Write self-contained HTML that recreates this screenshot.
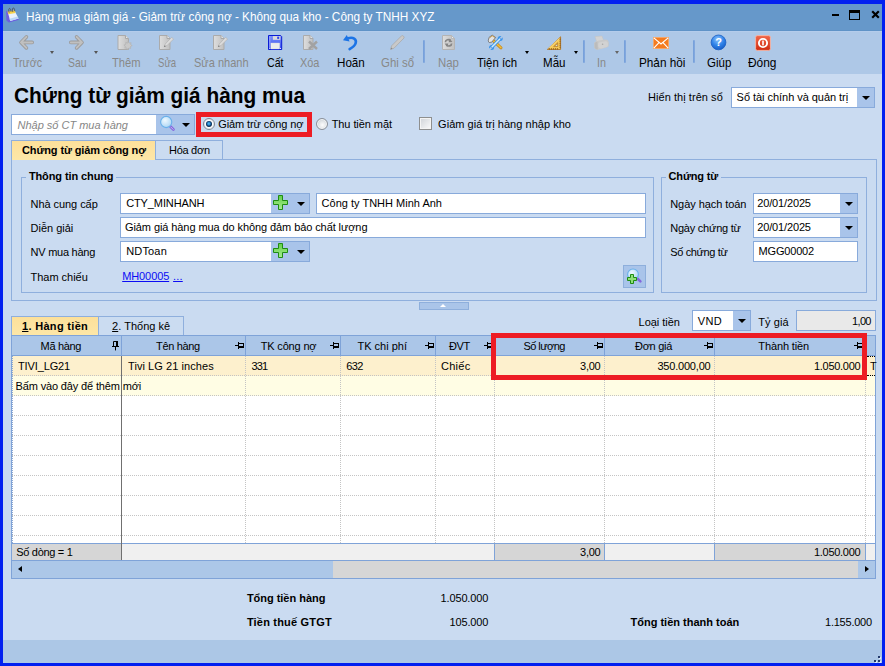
<!DOCTYPE html>
<html lang="vi"><head><meta charset="utf-8"><title>Hàng mua giảm giá</title>
<style>
*{box-sizing:border-box;margin:0;padding:0}
html,body{width:885px;height:666px;overflow:hidden;background:#0220f0}
body{position:relative;font-family:"Liberation Sans",sans-serif;font-size:11px;color:#000}
.a{position:absolute}
.t{position:absolute;white-space:nowrap}
.sep{top:40px;width:2px;height:23px;background:linear-gradient(90deg,#729dd9,#86abdf);border-radius:1px}
.dd{width:0;height:0;border-left:3.5px solid transparent;border-right:3.5px solid transparent;border-top:4px solid #000}
.dd.s{border-left-width:2.5px;border-right-width:2.5px;border-top-width:3px}
.dd{border-left-width:4px;border-right-width:4px}
.inp{background:#fff;border:1px solid #88aadb}
.btnp{background:#a9c4ea}
.grp{border:1px solid #8fafdd}
.tab{border:1px solid #8fafdd;border-bottom:none;background:#cbdcf1}
.tabA{background:linear-gradient(#fde09a,#fde7a8)}
.hc{top:336px;height:20px;background:#abc6e8;border-right:1px solid #7fa3d8;border-bottom:1px solid #7fa3d8}
.vl{top:356px;width:0;height:187px;border-left:1px dotted #c4c4c4}
.hl{left:12px;width:863px;height:0;border-top:1px dotted #c4c4c4}
.red{border:5px solid #ed1c24}
</style></head><body>
<!-- window chrome -->
<div class="a" style="left:3px;top:4px;width:879px;height:27px;background:#6698ca;border-bottom:1px solid #5f93c7"></div>
<div class="a" style="left:3px;top:31px;width:879px;height:43px;background:#aec8e7;border-top:1px solid #b4cceb"></div>
<div class="a" style="left:3px;top:74px;width:879px;height:566px;background:#cadbf1"></div>
<div class="a" style="left:3px;top:640px;width:879px;height:23px;background:#acc7e6"></div>

<!-- window controls -->
<div class="a" style="left:832px;top:14px;width:7px;height:2px;background:#000"></div>
<div class="a" style="left:849px;top:10px;width:11px;height:10px;border:1px solid #000;border-top-width:3px"></div>
<svg class="a" style="left:871px;top:10px" width="9" height="9" viewBox="0 0 9 9"><path d="M1.2 1.2 L7.8 7.8 M7.8 1.2 L1.2 7.8" stroke="#000" stroke-width="2.2"/></svg>

<!-- toolbar separators -->
<div class="a sep" style="left:423px"></div>
<div class="a sep" style="left:583px"></div>
<div class="a sep" style="left:624px"></div>
<div class="a sep" style="left:693px"></div>
<!-- toolbar dropdown arrows -->
<div class="a dd s" style="left:50px;top:51px;border-top-color:#555"></div>
<div class="a dd s" style="left:94px;top:51px;border-top-color:#555"></div>
<div class="a dd s" style="left:524.5px;top:51px"></div>
<div class="a dd s" style="left:574.2px;top:51px"></div>
<div class="a dd s" style="left:615px;top:51px;border-top-color:#666"></div>


<!-- combo Hiển thị trên sổ -->
<div class="a inp" style="left:731px;top:87px;width:144px;height:21px"></div>
<div class="a btnp" style="left:857px;top:88px;width:17px;height:19px"></div>
<div class="a dd" style="left:861.5px;top:96px"></div>

<!-- search box -->
<div class="a inp" style="left:11px;top:114px;width:184px;height:21px"></div>
<div class="a btnp" style="left:156px;top:115px;width:38px;height:19px"></div>
<div class="a dd" style="left:181.5px;top:123px"></div>

<!-- red highlight 1 -->
<div class="a red" style="left:196px;top:112px;width:116px;height:25px"></div>
<!-- radios -->
<div class="a" style="left:203px;top:118px;width:12px;height:12px;border-radius:50%;border:1px solid #7d8694;background:#fff;box-shadow:inset 0 0 0 1px #e4e6ea"></div>
<div class="a" style="left:205.7px;top:120.7px;width:6.6px;height:6.6px;border-radius:50%;background:radial-gradient(circle at 48% 45%,#5cc0f0 0,#2c8ed0 28%,#0e3a6c 52%,#0a2a50 70%)"></div>
<div class="a" style="left:316px;top:118px;width:12px;height:12px;border-radius:50%;border:1px solid #8a9099;background:radial-gradient(circle at 55% 60%,#fdfdfd 0,#e2e5e8 45%,#c9ced3 75%);box-shadow:inset 0 0 0 1px #f4f5f6"></div>
<!-- checkbox -->
<div class="a" style="left:419px;top:117px;width:13px;height:13px;border:1px solid #8e8f8f;background:linear-gradient(135deg,#cfd3d8,#fbfbfb);box-shadow:inset 0 0 0 1px #f4f4f4"></div>

<!-- top tabs -->
<div class="a tab tabA" style="left:11px;top:140px;width:145px;height:20px"></div>
<div class="a tab" style="left:155px;top:140px;width:68px;height:20px"></div>
<!-- tab panel -->
<div class="a grp" style="left:11px;top:159px;width:866px;height:142px"></div>
<div class="a" style="left:12px;top:159px;width:143px;height:1px;background:#fde7a8"></div>
<!-- groupboxes -->
<div class="a grp" style="left:21px;top:177px;width:633px;height:116px"></div>
<div class="a" style="left:26px;top:177px;width:90px;height:1px;background:#cadbf1"></div>
<div class="a grp" style="left:661px;top:177px;width:206px;height:116px"></div>
<div class="a" style="left:666px;top:177px;width:55px;height:1px;background:#cadbf1"></div>

<!-- inputs in group 1 -->
<div class="a inp" style="left:120px;top:193px;width:190px;height:21px"></div>
<div class="a btnp" style="left:271px;top:194px;width:38px;height:19px"></div>
<div class="a dd" style="left:296.5px;top:202px"></div>
<div class="a inp" style="left:316px;top:193px;width:330px;height:21px"></div>
<div class="a inp" style="left:120px;top:217px;width:526px;height:21px"></div>
<div class="a inp" style="left:120px;top:241px;width:190px;height:21px"></div>
<div class="a btnp" style="left:271px;top:242px;width:38px;height:19px"></div>
<div class="a dd" style="left:296.5px;top:250px"></div>
<div class="a btnp" style="left:623px;top:265px;width:23px;height:23px;border:1px solid #8eafdc"></div>

<!-- inputs in group 2 -->
<div class="a inp" style="left:753px;top:193px;width:105px;height:21px"></div>
<div class="a btnp" style="left:840px;top:194px;width:17px;height:19px"></div>
<div class="a dd" style="left:844.5px;top:202px"></div>
<div class="a inp" style="left:753px;top:217px;width:105px;height:21px"></div>
<div class="a btnp" style="left:840px;top:218px;width:17px;height:19px"></div>
<div class="a dd" style="left:844.5px;top:226px"></div>
<div class="a inp" style="left:753px;top:241px;width:105px;height:21px"></div>

<!-- collapse bar -->
<div class="a" style="left:419px;top:302px;width:50px;height:8px;background:#aac5e9;border:1px solid #8eafdc"></div>
<div class="a" style="left:440px;top:304px;width:0;height:0;border-left:3px solid transparent;border-right:3px solid transparent;border-bottom:3px solid #fff"></div>

<!-- grid tabs -->
<div class="a tab tabA" style="left:11px;top:316px;width:88px;height:20px"></div>
<div class="a tab" style="left:98px;top:316px;width:86px;height:20px"></div>
<!-- currency -->
<div class="a inp" style="left:692px;top:310px;width:59px;height:21px"></div>
<div class="a btnp" style="left:733px;top:311px;width:17px;height:19px"></div>
<div class="a dd" style="left:737.5px;top:319px"></div>
<div class="a inp" style="left:796px;top:310px;width:80px;height:21px;background:#e9e9e9"></div>

<!-- grid -->
<div class="a" style="left:11px;top:335px;width:865px;height:244px;background:#fff;border:1px solid #7fa3d8"></div>
<!-- header cells -->
<div class="a hc" style="left:12px;width:110px"></div>
<div class="a hc" style="left:122px;width:124px"></div>
<div class="a hc" style="left:246px;width:95px"></div>
<div class="a hc" style="left:341px;width:95px"></div>
<div class="a hc" style="left:436px;width:59px"></div>
<div class="a hc" style="left:495px;width:110px"></div>
<div class="a hc" style="left:605px;width:110px"></div>
<div class="a hc" style="left:715px;width:151px"></div>
<div class="a hc" style="left:866px;width:9px;border-right:none"></div>
<!-- rows -->
<div class="a" style="left:12px;top:356px;width:863px;height:20px;background:#fdf0cd"></div>
<div class="a" style="left:12px;top:376px;width:863px;height:20px;background:#fffde4"></div>
<!-- horizontal dotted lines -->
<div class="a hl" style="top:375px"></div>
<div class="a hl" style="top:395px"></div>
<div class="a hl" style="top:415px"></div>
<div class="a hl" style="top:435px"></div>
<div class="a hl" style="top:455px"></div>
<div class="a hl" style="top:475px"></div>
<div class="a hl" style="top:495px"></div>
<div class="a hl" style="top:515px"></div>
<div class="a hl" style="top:535px"></div>
<!-- vertical dotted lines -->
<div class="a vl" style="left:245px"></div>
<div class="a vl" style="left:340px"></div>
<div class="a vl" style="left:435px"></div>
<div class="a vl" style="left:494px"></div>
<div class="a vl" style="left:604px"></div>
<div class="a vl" style="left:714px"></div>
<div class="a vl" style="left:865px"></div>
<div class="a" style="left:867px;top:356px;width:8px;height:20px;border-top:1px dotted #000;border-bottom:1px dotted #000"></div>
<div class="a" style="left:12px;top:356px;width:0;height:187px;border-left:1px dotted #8fa9cf"></div>
<!-- fixed column splitter -->
<!-- footer row -->
<div class="a" style="left:12px;top:543px;width:863px;height:18px;background:#f0f0f0;border-top:1px solid #7fa3d8;border-bottom:1px solid #7fa3d8"></div>
<div class="a" style="left:12px;top:544px;width:109px;height:16px;background:#d6d6d6"></div>
<div class="a" style="left:494px;top:543px;width:111px;height:18px;background:#d6d6d6;border:1px solid #7fa3d8"></div>
<div class="a" style="left:714px;top:543px;width:152px;height:18px;background:#d6d6d6;border:1px solid #7fa3d8"></div>
<div class="a" style="left:121px;top:356px;width:1px;height:204px;background:#707070"></div>
<!-- scrollbar -->
<div class="a" style="left:12px;top:561px;width:863px;height:17px;background:#d6d6d6"></div>
<div class="a" style="left:12px;top:561px;width:321px;height:17px;background:#acc7e8"></div>
<div class="a" style="left:858px;top:561px;width:17px;height:17px;background:#acc7e8"></div>
<div class="a" style="left:18px;top:566px;width:0;height:0;border-top:3.5px solid transparent;border-bottom:3.5px solid transparent;border-right:4px solid #000"></div>
<div class="a" style="left:865px;top:566px;width:0;height:0;border-top:3.5px solid transparent;border-bottom:3.5px solid transparent;border-left:4px solid #000"></div>

<!-- pins -->
<svg class="a" style="left:112px;top:341px" width="8" height="10" viewBox="0 0 8 10"><path d="M1.5 .5 H4.5 V5 M1.5 .5 V5" fill="none" stroke="#000"/><rect x="4" y="0" width="2" height="5.5" fill="#000"/><rect x="0" y="5" width="7" height="1" fill="#000"/><rect x="3" y="6" width="1" height="3.4" fill="#000"/></svg>
<svg class="a" style="left:235px;top:342px" width="10" height="8" viewBox="0 0 10 8" shape-rendering="crispEdges"><rect x="0" y="3" width="3" height="1"/><rect x="3" y="0" width="1" height="7"/><rect x="4" y="1" width="5" height="1"/><rect x="8" y="1" width="1" height="5"/><rect x="4" y="4" width="5" height="2"/></svg>
<svg class="a" style="left:330px;top:342px" width="10" height="8" viewBox="0 0 10 8" shape-rendering="crispEdges"><rect x="0" y="3" width="3" height="1"/><rect x="3" y="0" width="1" height="7"/><rect x="4" y="1" width="5" height="1"/><rect x="8" y="1" width="1" height="5"/><rect x="4" y="4" width="5" height="2"/></svg>
<svg class="a" style="left:425px;top:342px" width="10" height="8" viewBox="0 0 10 8" shape-rendering="crispEdges"><rect x="0" y="3" width="3" height="1"/><rect x="3" y="0" width="1" height="7"/><rect x="4" y="1" width="5" height="1"/><rect x="8" y="1" width="1" height="5"/><rect x="4" y="4" width="5" height="2"/></svg>
<svg class="a" style="left:484px;top:342px" width="10" height="8" viewBox="0 0 10 8" shape-rendering="crispEdges"><rect x="0" y="3" width="3" height="1"/><rect x="3" y="0" width="1" height="7"/><rect x="4" y="1" width="5" height="1"/><rect x="8" y="1" width="1" height="5"/><rect x="4" y="4" width="5" height="2"/></svg>
<svg class="a" style="left:594px;top:342px" width="10" height="8" viewBox="0 0 10 8" shape-rendering="crispEdges"><rect x="0" y="3" width="3" height="1"/><rect x="3" y="0" width="1" height="7"/><rect x="4" y="1" width="5" height="1"/><rect x="8" y="1" width="1" height="5"/><rect x="4" y="4" width="5" height="2"/></svg>
<svg class="a" style="left:704px;top:342px" width="10" height="8" viewBox="0 0 10 8" shape-rendering="crispEdges"><rect x="0" y="3" width="3" height="1"/><rect x="3" y="0" width="1" height="7"/><rect x="4" y="1" width="5" height="1"/><rect x="8" y="1" width="1" height="5"/><rect x="4" y="4" width="5" height="2"/></svg>
<svg class="a" style="left:854px;top:342px" width="10" height="8" viewBox="0 0 10 8" shape-rendering="crispEdges"><rect x="0" y="3" width="3" height="1"/><rect x="3" y="0" width="1" height="7"/><rect x="4" y="1" width="5" height="1"/><rect x="8" y="1" width="1" height="5"/><rect x="4" y="4" width="5" height="2"/></svg>
<!-- red highlight 2 -->
<div class="a red" style="left:491px;top:333px;width:376px;height:47px"></div>

<!-- size grip -->
<div class="a" style="left:879px;top:657px;width:2px;height:2px;background:#e4edf8"></div>
<div class="a" style="left:875px;top:661px;width:2px;height:2px;background:#e4edf8"></div>
<div class="a" style="left:879px;top:661px;width:2px;height:2px;background:#e4edf8"></div>
<div class="a" style="left:878px;top:656px;width:2px;height:2px;background:#233a6c"></div>
<div class="a" style="left:874px;top:660px;width:2px;height:2px;background:#233a6c"></div>
<div class="a" style="left:878px;top:660px;width:2px;height:2px;background:#233a6c"></div>

<!-- title icon -->
<svg class="a" style="left:5px;top:7px" width="15" height="17" viewBox="0 0 15 17">
<path d="M1.1 3.6 L1.4 13.6 L3.8 15.4 L13.4 12.9 L13.6 11.6 L5 6 Z" fill="#6c5ee0"/>
<path d="M2.8 5.1 L9.6 3.8 L13.6 11.6 L5.2 13.9 Z" fill="#e9f2fd"/>
<path d="M4.6 11.8 L12.6 9.6 L13.6 11.6 L5.2 13.9 Z" fill="#b9d6f8"/>
<path d="M2.5 4.6 L9.6 3.3 L10.6 6 L3.3 7.3 Z" fill="#f6d24a"/>
<path d="M4.2 5.6 C2.4 .6 6 -.2 6 4.8 M7.9 5 C6.2 .2 9.8 -.6 9.7 4.2" stroke="#54545e" stroke-width=".9" fill="none"/>
</svg>
<!-- back / forward arrows -->
<svg class="a" style="left:18px;top:34px" width="17" height="17" viewBox="0 0 17 17">
<path d="M8.4 2.9 L3 8.4 L8.4 13.9 M3.6 8.4 H14.2" fill="none" stroke="#9a9a9a" stroke-width="3.6" stroke-linecap="round" stroke-linejoin="round"/>
<path d="M8.4 2.9 L3 8.4 L8.4 13.9 M3.6 8.4 H14.2" fill="none" stroke="#c0c0c0" stroke-width="2" stroke-linecap="round" stroke-linejoin="round"/>
</svg>
<svg class="a" style="left:68px;top:34px" width="17" height="17" viewBox="0 0 17 17">
<path d="M8.6 2.9 L14 8.4 L8.6 13.9 M13.4 8.4 H2.8" fill="none" stroke="#9a9a9a" stroke-width="3.6" stroke-linecap="round" stroke-linejoin="round"/>
<path d="M8.6 2.9 L14 8.4 L8.6 13.9 M13.4 8.4 H2.8" fill="none" stroke="#c0c0c0" stroke-width="2" stroke-linecap="round" stroke-linejoin="round"/>
</svg>
<!-- Thêm (doc + burst) -->
<svg class="a" style="left:117px;top:34px" width="17" height="17" viewBox="0 0 17 17">
<path d="M1 1.5 H8.5 L11.5 4.5 V15.5 H1 Z" fill="url(#dg)" stroke="#ababab"/>
<path d="M8.5 1.5 V4.5 H11.5" fill="#e6e6e6" stroke="#a9a9a9"/>
<path d="M11 7.6 l1.2 1.5 1.9-.4 -.5 1.8 1.6 1.1 -1.7.9 .2 1.9 -1.9-.4 -1.1 1.6 -1-1.7 -1.9.2 .6-1.8 -1.5-1.2 1.8-.8 .1-1.9 1.7.8z" fill="#c9c9c9" stroke="#aeaeae" stroke-width=".6"/>
</svg>
<!-- Sửa -->
<svg class="a" style="left:158px;top:34px" width="17" height="17" viewBox="0 0 17 17">
<path d="M1.5 1.5 H9 L12 4.5 V15.5 H1.5 Z" fill="url(#dg)" stroke="#ababab"/>
<path d="M9 1.5 V4.5 H12" fill="#e6e6e6" stroke="#a9a9a9"/>
<path d="M6.4 12.6 L7.2 10 L13.6 3.4 L15.6 5 L9 11.6 Z" fill="#dcdcdc" stroke="#b3b3b3" stroke-width=".7"/>
<circle cx="6.8" cy="12.3" r=".7" fill="#777"/>
</svg>
<!-- Sửa nhanh -->
<svg class="a" style="left:212px;top:34px" width="17" height="17" viewBox="0 0 17 17">
<path d="M1.5 1.5 H9 L12 4.5 V15.5 H1.5 Z" fill="url(#dg)" stroke="#ababab"/>
<path d="M9 1.5 V4.5 H12" fill="#e6e6e6" stroke="#a9a9a9"/>
<path d="M6.4 12.6 L7.2 10 L13.6 3.4 L15.6 5 L9 11.6 Z" fill="#dcdcdc" stroke="#b3b3b3" stroke-width=".7"/>
<circle cx="6.8" cy="12.3" r=".7" fill="#777"/>
</svg>
<!-- Cất (floppy) -->
<svg class="a" style="left:268px;top:35px" width="15" height="15" viewBox="0 0 15 15">
<defs><linearGradient id="fl" x1="0" y1="0" x2="0" y2="1"><stop offset="0" stop-color="#7d90f8"/><stop offset="1" stop-color="#3850f0"/></linearGradient></defs>
<path d="M.5 .5 H12.6 L13.7 1.6 V14.5 H.5 Z" fill="url(#fl)" stroke="#0a1cd6"/>
<rect x="1.2" y="1.2" width="1.2" height="12" fill="#a5b2fa" opacity=".7"/>
<rect x="4.9" y="1.1" width="7.4" height="3.7" fill="#dcdcdc"/>
<rect x="9.2" y="1.7" width="2" height="2.2" fill="#2a40ee"/>
<rect x="3" y="8.1" width="8.4" height="5.8" fill="#ececec" stroke="#fff8e0" stroke-width=".5"/>
<rect x="1.3" y="13" width="1" height="1" fill="#dfe4ff"/><rect x="12" y="13" width="1" height="1" fill="#dfe4ff"/>
</svg>
<!-- Xóa -->
<svg class="a" style="left:302px;top:34px" width="17" height="17" viewBox="0 0 17 17">
<path d="M1.5 1.5 H8 L11 4.5 V15.5 H1.5 Z" fill="url(#dg)" stroke="#ababab"/>
<path d="M8 1.5 V4.5 H11" fill="#e6e6e6" stroke="#a9a9a9"/>
<path d="M7 7.5 L15 15 M15 7.5 L7 15" stroke="#a2a2a2" stroke-width="2.4"/>
</svg>
<!-- Hoãn (undo) -->
<svg class="a" style="left:342px;top:34px" width="17" height="17" viewBox="0 0 17 17">
<path d="M6 4.3 C11 2.6 15 5.2 13.6 9.4 C12.9 11.6 10.6 13.4 7.6 15.2" fill="none" stroke="#1c74e6" stroke-width="2.6" stroke-linecap="round"/>
<path d="M1 6.2 L4.8 1 L7.6 7.6 Z" fill="#1c74e6"/>
</svg>
<!-- Ghi sổ (pencil) -->
<svg class="a" style="left:389px;top:34px" width="17" height="17" viewBox="0 0 17 17">
<path d="M1.6 15.4 L2.6 11.8 L12.6 1.8 C13.6 1 15.8 2.8 15 4 L5 14.2 Z" fill="#c9c9c9" stroke="#aaa" stroke-width=".8"/>
<path d="M1.6 15.4 L2.2 13.4 L3.6 14.8 Z" fill="#8a8a8a"/>
</svg>
<!-- Nạp -->
<svg class="a" style="left:441px;top:34px" width="17" height="17" viewBox="0 0 17 17">
<defs><linearGradient id="dg" x1="0" y1="0" x2="1" y2="0"><stop offset="0" stop-color="#dedede"/><stop offset="1" stop-color="#c0c0c0"/></linearGradient></defs>
<path d="M1.5 1.5 H10.5 L13.5 4.5 V15.5 H1.5 Z" fill="url(#dg)" stroke="#b4b4b4"/>
<path d="M10.5 1.5 V4.5 H13.5 Z" fill="#ececec" stroke="#b4b4b4" stroke-width=".8"/>
<path d="M4.4 8.2 C4.4 5.6 7.8 4.8 9.6 6.6 M10.6 9.4 C10.6 12 7.2 12.8 5.4 11" fill="none" stroke="#858585" stroke-width="1.7"/>
<path d="M8.8 4.6 L11.4 8 L7.6 8.2 Z M6.2 13 L3.6 9.6 L7.4 9.4 Z" fill="#858585"/>
</svg>
<!-- Tiện ích (tools) -->
<svg class="a" style="left:487px;top:34px" width="17" height="17" viewBox="0 0 17 17">
<path d="M6 6.4 L14 13.8" stroke="#c48a22" stroke-width="3" stroke-linecap="round"/>
<path d="M6 6.4 L14 13.8" stroke="#f0c040" stroke-width="1.4" stroke-linecap="round"/>
<path d="M1.2 7 L2 3.4 L5.2 1.1 L8.8 3.6 L6.8 5.4 L5 8 L2.2 8.6 Z" fill="#e4e4e4" stroke="#6e6e6e" stroke-width=".8" stroke-linejoin="round"/>
<path d="M2.6 4 L5.2 1.8 L8 3.6" fill="none" stroke="#c48a22" stroke-width=".7"/>
<path d="M5.2 12.8 L12.6 5.2" stroke="#3a94ea" stroke-width="3.2" stroke-linecap="round"/>
<circle cx="13.2" cy="4.6" r="2.5" fill="#3a94ea"/><circle cx="4.6" cy="13.4" r="2.5" fill="#3a94ea"/>
<path d="M5.2 12.8 L12.6 5.2" stroke="#cfeafc" stroke-width="1.6" stroke-linecap="round"/>
<path d="M13.4 4.4 L16.2 1.6" stroke="#aec8e7" stroke-width="1.7"/>
<path d="M4.4 13.6 L1.6 16.4" stroke="#aec8e7" stroke-width="1.7"/>
</svg>
<!-- Mẫu (set square) -->
<svg class="a" style="left:546px;top:35px" width="16" height="16" viewBox="0 0 16 16">
<path d="M1.4 14.4 L14.6 1.8 V14.4 Z" fill="#f6cc5a" stroke="#b27a2c" stroke-width="1" stroke-linejoin="round"/>
<path d="M2.6 13.6 L13.6 3.2" stroke="#fbe08a" stroke-width="1"/>
<path d="M7.6 11.6 L11.8 7.6 V11.6 Z" fill="#c8943c" stroke="#b27a2c" stroke-width=".6"/>
<path d="M9.4 11 L11.2 9.2 V11 Z" fill="#cfe0f4"/>
<path d="M3.4 14.6v-1.4 M5.4 14.6v-1.4 M7.4 14.6v-1.4 M9.4 14.6v-1.4 M11.4 14.6v-1.4 M14.8 4.2h-1.4 M14.8 6.2h-1.4 M14.8 8.2h-1.4 M14.8 10.2h-1.4 M14.8 12.2h-1.4" stroke="#8a5410" stroke-width=".9"/>
</svg>
<!-- In (printer, disabled) -->
<svg class="a" style="left:593px;top:35px" width="17" height="16" viewBox="0 0 17 16">
<path d="M2 1.6 L9 1 L10.6 5.4 L3.6 6.6 Z" fill="#d3d3d3" stroke="#c2c2c2" stroke-width=".5"/>
<path d="M1.2 8 C1.4 6.8 2.6 6.4 4.2 6 L12.6 4.6 C14.6 4.8 15.8 6 15.8 7.6 V10.6 C15.6 11.8 14.6 12.4 12.8 12.8 L4.8 14.8 C2.6 14.8 1.2 13.8 1.2 12 Z" fill="#c9c9c9"/>
<path d="M5.4 8.6 C5.6 7.6 6.6 7.2 8 7 L12.6 6.2 C14.4 6.4 15 7.4 15 9 V10.4 C14.8 11.4 14 11.8 12.6 12.2 L8.2 13.4 C6.4 13.4 5.4 12.6 5.4 11 Z" fill="#d2d2d2"/>
<path d="M1.6 8.4 C2 7.4 3 7 4.4 6.8 L4.8 14.4 C3 14.4 1.8 13.6 1.6 12.2 Z" fill="#bcbcbc"/>
<circle cx="9.6" cy="9.2" r=".8" fill="#a8a8a8"/>
</svg>
<!-- Phản hồi (mail) -->
<svg class="a" style="left:653px;top:37px" width="16" height="12" viewBox="0 0 16 12">
<rect x=".4" y=".4" width="15.2" height="11.2" fill="#f47b20" stroke="#f9a868" stroke-width=".8"/>
<path d="M.8 .8 L8 7 L15.2 .8 M.8 11.2 L6 5.6 M15.2 11.2 L10 5.6" fill="none" stroke="#fff" stroke-width="1.1"/>
</svg>
<!-- Giúp -->
<svg class="a" style="left:710px;top:34px" width="17" height="17" viewBox="0 0 17 17">
<defs><radialGradient id="hp" cx=".45" cy=".3" r=".75"><stop offset="0" stop-color="#8cc4ff"/><stop offset=".55" stop-color="#2f82e8"/><stop offset="1" stop-color="#1558c0"/></radialGradient></defs>
<circle cx="8.5" cy="8.4" r="7.4" fill="url(#hp)" stroke="#1b5fc4" stroke-width=".8"/>
<text x="8.5" y="12.4" font-family="Liberation Sans,sans-serif" font-weight="bold" font-size="11" fill="#fff" text-anchor="middle">?</text>
</svg>
<!-- Đóng -->
<svg class="a" style="left:755px;top:35px" width="16" height="16" viewBox="0 0 16 16">
<defs><linearGradient id="cl" x1="0" y1="0" x2="0" y2="1"><stop offset="0" stop-color="#f0674a"/><stop offset="1" stop-color="#cf2a10"/></linearGradient></defs>
<rect x=".6" y=".6" width="14.8" height="14.8" rx="1.6" fill="url(#cl)" stroke="#f6b8a8" stroke-width=".9"/>
<circle cx="8" cy="8" r="4.1" fill="none" stroke="#fff" stroke-width="1.9"/>
<rect x="7.2" y="5.6" width="1.6" height="4.8" fill="#fff"/>
</svg>
<!-- search magnifier -->
<svg class="a" style="left:159px;top:115px" width="18" height="18" viewBox="0 0 18 18">
<defs><radialGradient id="mg" cx=".4" cy=".35" r=".7"><stop offset="0" stop-color="#eef8ff"/><stop offset="1" stop-color="#a9d4f4"/></radialGradient></defs>
<path d="M11.4 11.6 L14.4 14.6" stroke="#8468dc" stroke-width="2.8" stroke-linecap="round"/>
<path d="M11.8 12 L14.2 14.4" stroke="#c5b6f4" stroke-width="1" stroke-linecap="round"/>
<circle cx="7.2" cy="7" r="5.6" fill="url(#mg)" stroke="#69b0ea" stroke-width="1.1"/>
</svg>
<!-- green plus x2 -->
<svg class="a" style="left:273px;top:195px" width="15" height="15" viewBox="0 0 15 15"><defs><linearGradient id="gp" x1="0" y1="0" x2="0" y2="1"><stop offset="0" stop-color="#63d048"/><stop offset="1" stop-color="#a6ec90"/></linearGradient></defs>
<path d="M5.5 .5 H9.5 V5.5 H14.5 V9.5 H9.5 V14.5 H5.5 V9.5 H.5 V5.5 H5.5 Z" fill="url(#gp)" stroke="#1f8c12"/></svg>
<svg class="a" style="left:273px;top:243px" width="15" height="15" viewBox="0 0 15 15">
<path d="M5.5 .5 H9.5 V5.5 H14.5 V9.5 H9.5 V14.5 H5.5 V9.5 H.5 V5.5 H5.5 Z" fill="url(#gp)" stroke="#1f8c12"/></svg>
<!-- magnifier+plus button icon -->
<svg class="a" style="left:625px;top:267px" width="19" height="19" viewBox="0 0 19 19">
<path d="M11.6 10.8 L15.4 14.4" stroke="#8468dc" stroke-width="2.6" stroke-linecap="round"/>
<circle cx="8" cy="7.4" r="5.4" fill="url(#mg)" stroke="#69b0ea" stroke-width="1.1"/>
<path d="M5.5 7.5 H8.5 V10.5 H11.5 V13.5 H8.5 V16.5 H5.5 V13.5 H2.5 V10.5 H5.5 Z" fill="#8fe078" stroke="#1f8c12"/>
</svg>

<div class="t" style="top:9.35px;font-size:12.5px;line-height:16.5px;height:16.5px;left:25.5px;transform:scaleX(0.9430);transform-origin:0 50%;color:#fff;">Hàng mua giảm giá - Giảm trừ công nợ - Không qua kho - Công ty TNHH XYZ</div>
<div class="t" style="top:53.8px;font-size:13px;line-height:17px;height:17px;left:12.5px;transform:scaleX(0.8165);transform-origin:0 50%;color:#888888;">Trước</div>
<div class="t" style="top:53.8px;font-size:13px;line-height:17px;height:17px;left:68px;transform:scaleX(0.7995);transform-origin:0 50%;color:#888888;">Sau</div>
<div class="t" style="top:53.8px;font-size:13px;line-height:17px;height:17px;left:112.4px;transform:scaleX(0.8606);transform-origin:0 50%;color:#888888;">Thêm</div>
<div class="t" style="top:53.8px;font-size:13px;line-height:17px;height:17px;left:157.5px;transform:scaleX(0.7355);transform-origin:0 50%;color:#888888;">Sửa</div>
<div class="t" style="top:53.8px;font-size:13px;line-height:17px;height:17px;left:194.4px;transform:scaleX(0.8482);transform-origin:0 50%;color:#888888;">Sửa nhanh</div>
<div class="t" style="top:53.8px;font-size:13px;line-height:17px;height:17px;left:266.5px;transform:scaleX(0.8154);transform-origin:0 50%;">Cất</div>
<div class="t" style="top:53.8px;font-size:13px;line-height:17px;height:17px;left:300.3px;transform:scaleX(0.8384);transform-origin:0 50%;color:#888888;">Xóa</div>
<div class="t" style="top:53.8px;font-size:13px;line-height:17px;height:17px;left:336.7px;transform:scaleX(0.8945);transform-origin:0 50%;">Hoãn</div>
<div class="t" style="top:53.8px;font-size:13px;line-height:17px;height:17px;left:381px;transform:scaleX(0.8782);transform-origin:0 50%;color:#888888;">Ghi sổ</div>
<div class="t" style="top:53.8px;font-size:13px;line-height:17px;height:17px;left:437.6px;transform:scaleX(0.8760);transform-origin:0 50%;color:#888888;">Nạp</div>
<div class="t" style="top:53.8px;font-size:13px;line-height:17px;height:17px;left:476.5px;transform:scaleX(0.8762);transform-origin:0 50%;">Tiện ích</div>
<div class="t" style="top:53.8px;font-size:13px;line-height:17px;height:17px;left:543px;transform:scaleX(0.8894);transform-origin:0 50%;">Mẫu</div>
<div class="t" style="top:53.8px;font-size:13px;line-height:17px;height:17px;left:597px;transform:scaleX(0.8300);transform-origin:0 50%;color:#888888;">In</div>
<div class="t" style="top:53.8px;font-size:13px;line-height:17px;height:17px;left:638.6px;transform:scaleX(0.9040);transform-origin:0 50%;">Phản hồi</div>
<div class="t" style="top:53.8px;font-size:13px;line-height:17px;height:17px;left:707.4px;transform:scaleX(0.8846);transform-origin:0 50%;">Giúp</div>
<div class="t" style="top:53.8px;font-size:13px;line-height:17px;height:17px;left:748px;transform:scaleX(0.9170);transform-origin:0 50%;">Đóng</div>
<div class="t" style="top:83.2px;font-size:22px;line-height:26px;height:26px;left:14px;transform:scaleX(0.9483);transform-origin:0 50%;font-weight:bold;">Chứng từ giảm giá hàng mua</div>
<div class="t" style="top:90px;font-size:11px;line-height:15px;height:15px;left:648px;letter-spacing:0.054px;">Hiển thị trên sổ</div>
<div class="t" style="top:90px;font-size:11px;line-height:15px;height:15px;left:736.6px;letter-spacing:-0.040px;">Sổ tài chính và quản trị</div>
<div class="t" style="top:117.5px;font-size:11px;line-height:15px;height:15px;left:17.5px;letter-spacing:-0.010px;font-style:italic;color:#868686;">Nhập số CT mua hàng</div>
<div class="t" style="top:116.8px;font-size:11px;line-height:15px;height:15px;left:218.3px;letter-spacing:-0.108px;">Giảm trừ công nợ</div>
<div class="t" style="top:116.8px;font-size:11px;line-height:15px;height:15px;left:331.7px;letter-spacing:-0.076px;">Thu tiền mặt</div>
<div class="t" style="top:116.5px;font-size:11px;line-height:15px;height:15px;left:438.1px;letter-spacing:0.032px;">Giảm giá trị hàng nhập kho</div>
<div class="t" style="top:142.5px;font-size:11px;line-height:15px;height:15px;left:22px;letter-spacing:-0.121px;font-weight:bold;">Chứng từ giảm công nợ</div>
<div class="t" style="top:142.5px;font-size:11px;line-height:15px;height:15px;left:169px;letter-spacing:-0.281px;">Hóa đơn</div>
<div class="t" style="top:168.5px;font-size:11px;line-height:15px;height:15px;left:28.9px;letter-spacing:-0.104px;font-weight:bold;">Thông tin chung</div>
<div class="t" style="top:196.5px;font-size:11px;line-height:15px;height:15px;left:30.6px;letter-spacing:-0.063px;">Nhà cung cấp</div>
<div class="t" style="top:220.8px;font-size:11px;line-height:15px;height:15px;left:30.6px;letter-spacing:-0.014px;">Diễn giải</div>
<div class="t" style="top:244.8px;font-size:11px;line-height:15px;height:15px;left:30.6px;letter-spacing:-0.257px;">NV mua hàng</div>
<div class="t" style="top:269.5px;font-size:11px;line-height:15px;height:15px;left:30.6px;letter-spacing:-0.032px;">Tham chiếu</div>
<div class="t" style="top:196.2px;font-size:11px;line-height:15px;height:15px;left:126.2px;letter-spacing:-0.115px;">CTY_MINHANH</div>
<div class="t" style="top:196.2px;font-size:11px;line-height:15px;height:15px;left:321.6px;letter-spacing:0.007px;">Công ty TNHH Minh Anh</div>
<div class="t" style="top:220.3px;font-size:11px;line-height:15px;height:15px;left:125px;letter-spacing:-0.087px;">Giảm giá hàng mua do không đảm bảo chất lượng</div>
<div class="t" style="top:244.2px;font-size:11px;line-height:15px;height:15px;left:126.2px;letter-spacing:0.170px;">NDToan</div>
<div class="t" style="top:268.5px;font-size:11px;line-height:15px;height:15px;left:122.2px;letter-spacing:-0.101px;color:#0c0cf4;text-decoration:underline;">MH00005</div>
<div class="t" style="top:268.5px;font-size:11px;line-height:15px;height:15px;left:173.1px;letter-spacing:0.164px;color:#0c0cf4;text-decoration:underline;">...</div>
<div class="t" style="top:168.5px;font-size:11px;line-height:15px;height:15px;left:668.6px;letter-spacing:-0.167px;font-weight:bold;">Chứng từ</div>
<div class="t" style="top:196.5px;font-size:11px;line-height:15px;height:15px;left:670.2px;letter-spacing:-0.059px;">Ngày hạch toán</div>
<div class="t" style="top:221px;font-size:11px;line-height:15px;height:15px;left:670.2px;letter-spacing:-0.220px;">Ngày chứng từ</div>
<div class="t" style="top:244.8px;font-size:11px;line-height:15px;height:15px;left:670.2px;letter-spacing:-0.352px;">Số chứng từ</div>
<div class="t" style="top:196.2px;font-size:11px;line-height:15px;height:15px;left:757.2px;letter-spacing:-0.140px;">20/01/2025</div>
<div class="t" style="top:220.2px;font-size:11px;line-height:15px;height:15px;left:757.2px;letter-spacing:-0.140px;">20/01/2025</div>
<div class="t" style="top:244.2px;font-size:11px;line-height:15px;height:15px;left:758.5px;letter-spacing:-0.168px;">MGG00002</div>
<div class="t" style="top:319px;font-size:11px;line-height:15px;height:15px;left:22px;letter-spacing:0.314px;font-weight:bold;"><u>1</u>. Hàng tiền</div>
<div class="t" style="top:319px;font-size:11px;line-height:15px;height:15px;left:112.1px;letter-spacing:0.009px;"><u>2</u>. Thống kê</div>
<div class="t" style="top:314.5px;font-size:11px;line-height:15px;height:15px;left:638.6px;letter-spacing:-0.037px;">Loại tiền</div>
<div class="t" style="top:314px;font-size:11px;line-height:15px;height:15px;left:697.8px;letter-spacing:0.383px;">VND</div>
<div class="t" style="top:314.5px;font-size:11px;line-height:15px;height:15px;left:758.3px;letter-spacing:0.066px;">Tỷ giá</div>
<div class="t" style="top:314px;font-size:11px;line-height:15px;height:15px;left:852px;letter-spacing:-0.641px;">1,00</div>
<div class="t" style="top:338.8px;font-size:11px;line-height:15px;height:15px;left:40.6px;letter-spacing:-0.319px;">Mã hàng</div>
<div class="t" style="top:338.8px;font-size:11px;line-height:15px;height:15px;left:156px;letter-spacing:-0.326px;">Tên hàng</div>
<div class="t" style="top:338.8px;font-size:11px;line-height:15px;height:15px;left:260.7px;letter-spacing:-0.162px;">TK công nợ</div>
<div class="t" style="top:338.8px;font-size:11px;line-height:15px;height:15px;left:357.5px;">TK chi phí</div>
<div class="t" style="top:338.8px;font-size:11px;line-height:15px;height:15px;left:448.9px;letter-spacing:-0.350px;">ĐVT</div>
<div class="t" style="top:338.8px;font-size:11px;line-height:15px;height:15px;left:523.4px;letter-spacing:-0.526px;">Số lượng</div>
<div class="t" style="top:338.8px;font-size:11px;line-height:15px;height:15px;left:635px;letter-spacing:-0.269px;">Đơn giá</div>
<div class="t" style="top:338.8px;font-size:11px;line-height:15px;height:15px;left:758.3px;letter-spacing:-0.120px;">Thành tiền</div>
<div class="t" style="top:358.8px;font-size:11px;line-height:15px;height:15px;left:18px;letter-spacing:-0.125px;">TIVI_LG21</div>
<div class="t" style="top:358.8px;font-size:11px;line-height:15px;height:15px;left:128px;letter-spacing:0.070px;">Tivi LG 21 inches</div>
<div class="t" style="top:358.8px;font-size:11px;line-height:15px;height:15px;left:251.4px;letter-spacing:-0.780px;">331</div>
<div class="t" style="top:358.8px;font-size:11px;line-height:15px;height:15px;left:346.2px;letter-spacing:-0.530px;">632</div>
<div class="t" style="top:358.8px;font-size:11px;line-height:15px;height:15px;left:440.9px;letter-spacing:0.294px;">Chiếc</div>
<div class="t" style="top:358.8px;font-size:11px;line-height:15px;height:15px;left:580.1px;letter-spacing:-0.274px;">3,00</div>
<div class="t" style="top:358.8px;font-size:11px;line-height:15px;height:15px;left:657.4px;letter-spacing:-0.196px;">350.000,00</div>
<div class="t" style="top:358.8px;font-size:11px;line-height:15px;height:15px;left:814px;letter-spacing:-0.292px;">1.050.000</div>
<div class="t" style="top:358.8px;font-size:11px;line-height:15px;height:15px;left:870px;">T</div>
<div class="t" style="top:378.5px;font-size:11px;line-height:15px;height:15px;left:15.6px;letter-spacing:-0.150px;">Bấm vào đây để thêm mới</div>
<div class="t" style="top:544.5px;font-size:11px;line-height:15px;height:15px;left:16.3px;letter-spacing:-0.314px;">Số dòng = 1</div>
<div class="t" style="top:544.5px;font-size:11px;line-height:15px;height:15px;left:580.1px;letter-spacing:-0.274px;">3,00</div>
<div class="t" style="top:544.5px;font-size:11px;line-height:15px;height:15px;left:814px;letter-spacing:-0.292px;">1.050.000</div>
<div class="t" style="top:590.5px;font-size:11px;line-height:15px;height:15px;left:246.9px;letter-spacing:-0.025px;font-weight:bold;">Tổng tiền hàng</div>
<div class="t" style="top:614.5px;font-size:11px;line-height:15px;height:15px;left:246.9px;letter-spacing:0.193px;font-weight:bold;">Tiền thuế GTGT</div>
<div class="t" style="top:590.8px;font-size:11px;line-height:15px;height:15px;left:440.6px;letter-spacing:-0.155px;">1.050.000</div>
<div class="t" style="top:614.8px;font-size:11px;line-height:15px;height:15px;left:449.6px;letter-spacing:-0.178px;">105.000</div>
<div class="t" style="top:614.5px;font-size:11px;line-height:15px;height:15px;left:630.5px;font-weight:bold;">Tổng tiền thanh toán</div>
<div class="t" style="top:614.8px;font-size:11px;line-height:15px;height:15px;left:825px;letter-spacing:-0.230px;">1.155.000</div>
</body></html>
